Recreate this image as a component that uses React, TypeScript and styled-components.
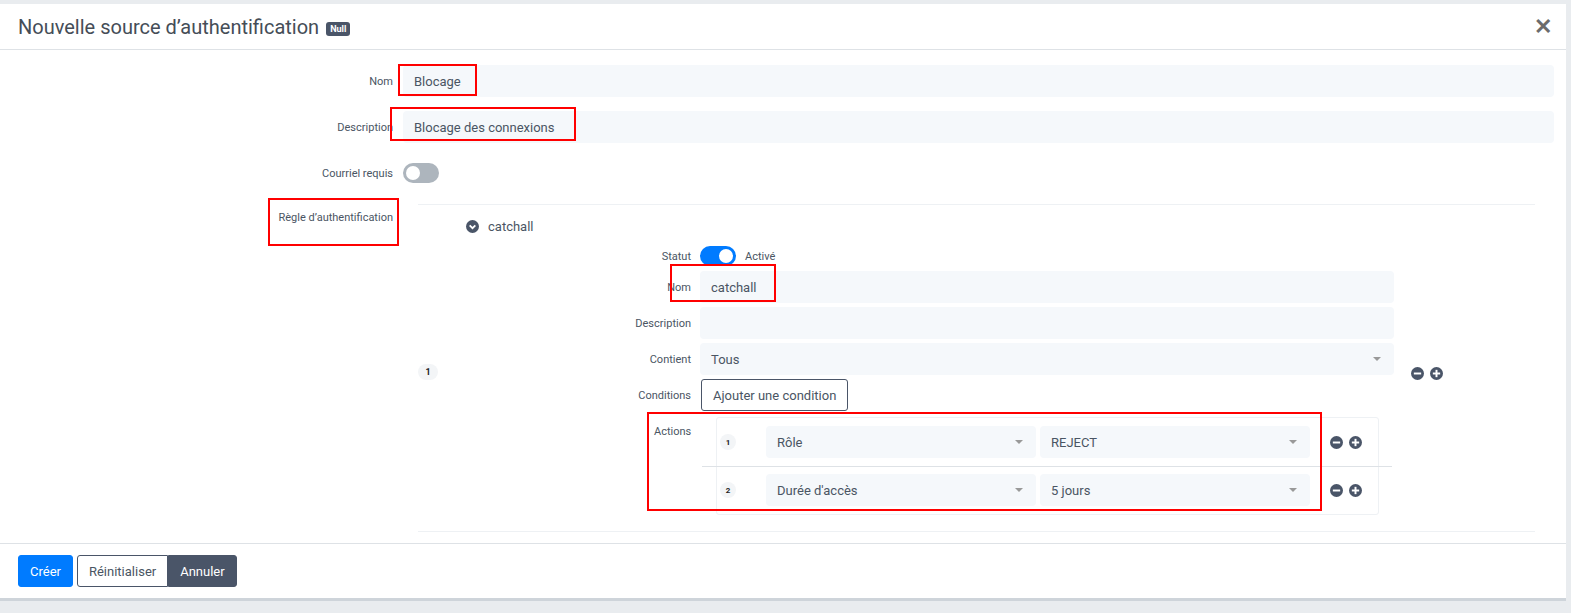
import React from "react";
import styled, { createGlobalStyle } from "styled-components";

const Global = createGlobalStyle`
  html, body { margin: 0; padding: 0; background: #e9ecef; font-family: Roboto, "Liberation Sans", Arial, sans-serif; }
  * { box-sizing: border-box; }
`;

const Page = styled.div`position: relative; width: 1571px; height: 613px; padding-top: 4px;`;
const Modal = styled.div`
  width: 1566px; height: 597px; background: #fff; border-bottom: 3px solid #ced4da;
  display: flex; flex-direction: column;
`;
const Header = styled.div`
  height: 46px; border-bottom: 1px solid #dee2e6; display: flex; align-items: center;
  padding: 0 14px 0 18px; justify-content: space-between;
`;
const Title = styled.div`font-size: 20px; color: #454d57; display: flex; align-items: center; gap: 7px;`;
const Badge = styled.span`
  background: #4a5568; color: #fff; font-size: 9px; font-weight: 700; padding: 2px 4px;
  border-radius: 3px; margin-top: 4px;
`;
const Close = styled.span`font-size: 22px; color: #6c6c6c; font-weight: 700; line-height: 1;`;
const Body = styled.div`flex: 1; padding: 15px 12px 0 0; display: flex; flex-direction: column; gap: 14px;`;
const Row = styled.div<{ $top?: boolean }>`
  display: grid; grid-template-columns: 393px 1fr; column-gap: 10px;
  align-items: ${p => (p.$top ? "start" : "center")};
`;
const Label = styled.div<{ $pt?: number }>`
  text-align: right; font-size: 11px; color: #4a5563; padding-top: ${p => p.$pt ?? 0}px;
`;
const Input = styled.div`
  height: 32px; background: #f5f8fb; border-radius: 4px; font-size: 13px; color: #4a5563;
  display: flex; align-items: center; padding: 0 11px; position: relative;
`;
const Toggle = styled.div<{ $on?: boolean }>`
  width: 36px; height: 20px; border-radius: 10px; background: ${p => (p.$on ? "#007bff" : "#adb5bd")};
  position: relative;
  &::after { content: ""; position: absolute; top: 3px; ${p => (p.$on ? "right: 3px" : "left: 3px")};
    width: 14px; height: 14px; border-radius: 50%; background: #fff; }
`;
const Panel = styled.div`
  margin: 7px 19px 0 15px; border-top: 1px solid #eef1f4; border-bottom: 1px solid #eef1f4;
  display: grid; grid-template-columns: 30px 946px auto; padding-bottom: 16px;
`;
const NumBadge = styled.span`
  width: 20px; height: 16px; border-radius: 8px; background: #f3f5f7; font-size: 9px; font-weight: 700;
  color: #222; display: inline-flex; align-items: center; justify-content: center; align-self: center;
`;
const RuleBadge = styled(NumBadge)`margin-top: 24px;`;
const Main = styled.div`display: flex; flex-direction: column;`;
const RuleHead = styled.div`
  height: 40px; display: flex; align-items: center; gap: 9px; padding-left: 18px; padding-top: 2px;
  font-size: 13px; color: #4a5563;
`;
const InnerRows = styled.div`display: flex; flex-direction: column; gap: 4px;`;
const IRow = styled.div<{ $top?: boolean }>`
  display: grid; grid-template-columns: 243px 1fr; column-gap: 9px;
  align-items: ${p => (p.$top ? "start" : "center")};
`;
const StatusRow = styled.div`display: flex; align-items: center; gap: 9px; font-size: 11px; color: #4a5563; height: 22px;`;
const Select = styled(Input)`justify-content: space-between;`;
const Caret = styled.span`
  width: 0; height: 0; border-left: 4px solid transparent; border-right: 4px solid transparent;
  border-top: 4px solid #999; margin-right: 2px;
`;
const OutlineBtn = styled.button`
  height: 32px; padding: 0 11px; border: 1px solid #4a5568; border-radius: 3px; background: #fff;
  font: 13px Roboto, "Liberation Sans", sans-serif; color: #4a5563; justify-self: start; margin-left: 1px;
`;
const ActionsWrap = styled.div`margin-left: 2px; width: 690px;`;
const ActLabel = styled(Label)`text-align: left; padding-left: 206px;`;
const ActBox = styled.div`
  margin-left: 14px; width: 663px; border: 1px solid #eef1f4; border-radius: 3px;
`;
const ActRow = styled.div<{ $sep?: boolean }>`
  display: grid; grid-template-columns: 45px 270px 270px auto; column-gap: 4px; align-items: center;
  padding: 8px 0; position: relative;
  ${p => p.$sep && `&::before { content: ""; position: absolute; top: 0; left: -15px; width: 690px; border-top: 1px solid #dee2e6; }`}
`;
const SmallBadge = styled(NumBadge)`width: 16px; margin-left: 3px; font-size: 8px;`;
const Icons = styled.div<{ $ml?: number }>`display: flex; gap: 6px; margin-left: ${p => p.$ml ?? 0}px; align-items: center;`;
const Rule = styled.div`align-self: center; padding-left: 17px; padding-top: 26px;`;
const Footer = styled.div`
  border-top: 1px solid #dee2e6; padding: 11px 18px; display: flex; gap: 4px; margin-top: auto; height: 55px;
`;
const Btn = styled.button<{ $v: "primary" | "outline" | "dark" }>`
  height: 32px; padding: 0 11px; font: 13px Roboto, "Liberation Sans", sans-serif; border-radius: 3px;
  border: 1px solid ${p => (p.$v === "primary" ? "#007bff" : "#4a5568")};
  background: ${p => (p.$v === "primary" ? "#007bff" : p.$v === "dark" ? "#4a5568" : "#fff")};
  color: ${p => (p.$v === "outline" ? "#4a5563" : "#fff")};
`;
const Group = styled.div`display: flex; & > button:first-child { border-radius: 3px 0 0 3px; } & > button:last-child { border-radius: 0 3px 3px 0; }`;
const RedBox = styled.div`position: absolute; border: 2px solid #f00; pointer-events: none;`;

const Circle = ({ plus, down }: { plus?: boolean; down?: boolean }) => (
  <svg width="13" height="13" viewBox="0 0 16 16">
    <circle cx="8" cy="8" r="8" fill="#4a5568" />
    {down ? (
      <path d="M4.5 6.5 L8 10 L11.5 6.5" stroke="#fff" strokeWidth="2.2" fill="none" />
    ) : (
      <>
        <rect x="3.5" y="6.8" width="9" height="2.4" fill="#fff" />
        {plus && <rect x="6.8" y="3.5" width="2.4" height="9" fill="#fff" />}
      </>
    )}
  </svg>
);

export default function App() {
  return (
    <Page>
      <Global />
      <Modal>
        <Header>
          <Title>Nouvelle source d’authentification <Badge>Null</Badge></Title>
          <Close>✕</Close>
        </Header>
        <Body>
          <Row><Label>Nom</Label><Input>Blocage</Input></Row>
          <Row><Label>Description</Label><Input>Blocage des connexions</Input></Row>
          <Row style={{ marginTop: 6 }}><Label>Courriel requis</Label><Toggle /></Row>
          <Row $top>
            <Label $pt={14}>Règle d’authentification</Label>
            <Panel>
              <RuleBadge>1</RuleBadge>
              <Main>
                <RuleHead><Circle down /> catchall</RuleHead>
                <InnerRows>
                  <IRow><Label>Statut</Label><StatusRow><Toggle $on /> Activé</StatusRow></IRow>
                  <IRow><Label>Nom</Label><Input>catchall</Input></IRow>
                  <IRow><Label>Description</Label><Input /></IRow>
                  <IRow><Label>Contient</Label><Select>Tous<Caret /></Select></IRow>
                  <IRow><Label>Conditions</Label><OutlineBtn>Ajouter une condition</OutlineBtn></IRow>
                  <IRow $top style={{ marginTop: 2 }}>
                    <ActLabel $pt={8}>Actions</ActLabel>
                    <ActionsWrap>
                      <ActBox>
                        <ActRow>
                          <SmallBadge>1</SmallBadge>
                          <Select>Rôle<Caret /></Select>
                          <Select>REJECT<Caret /></Select>
                          <Icons $ml={16}><Circle /><Circle plus /></Icons>
                        </ActRow>
                        <ActRow $sep>
                          <SmallBadge>2</SmallBadge>
                          <Select>Durée d'accès<Caret /></Select>
                          <Select>5 jours<Caret /></Select>
                          <Icons $ml={16}><Circle /><Circle plus /></Icons>
                        </ActRow>
                      </ActBox>
                    </ActionsWrap>
                  </IRow>
                </InnerRows>
              </Main>
              <Rule><Icons><Circle /><Circle plus /></Icons></Rule>
            </Panel>
          </Row>
        </Body>
        <Footer>
          <Btn $v="primary">Créer</Btn>
          <Group><Btn $v="outline">Réinitialiser</Btn><Btn $v="dark">Annuler</Btn></Group>
        </Footer>
      </Modal>
      <RedBox style={{ left: 398, top: 64, width: 79, height: 32 }} />
      <RedBox style={{ left: 390, top: 107, width: 186, height: 34 }} />
      <RedBox style={{ left: 268, top: 198, width: 131, height: 48 }} />
      <RedBox style={{ left: 670, top: 264, width: 106, height: 38 }} />
      <RedBox style={{ left: 647, top: 412, width: 675, height: 99 }} />
    </Page>
  );
}
